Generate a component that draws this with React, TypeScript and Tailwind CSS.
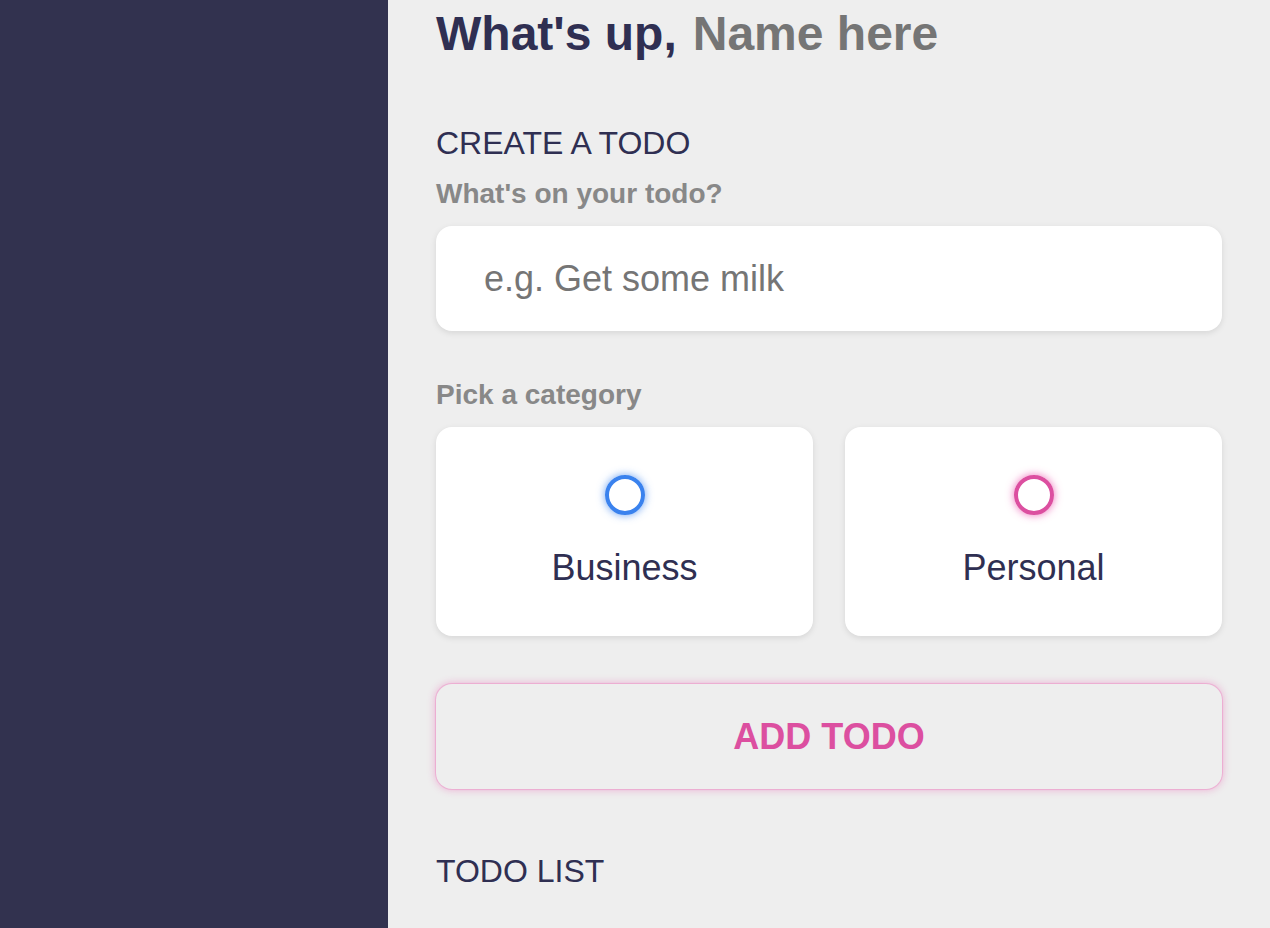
import React, {useState} from 'react';

const font = {fontFamily: '"Liberation Sans", Arial, sans-serif'};

const App: React.FC = () => {
    const [name, setName] = useState('');
    const [content, setContent] = useState('');
    const [category, setCategory] = useState<string | null>(null);

    const options = [
        {value: 'business', label: 'Business', bubble: 'border-[#3a82ee] shadow-[0_0_8px_rgba(58,130,238,0.75)]'},
        {value: 'personal', label: 'Personal', bubble: 'border-[#dc4fa0] shadow-[0_0_8px_rgba(234,64,164,0.75)]'}
    ];

    return (
        <div className="flex min-h-screen" style={font}>
            <aside className="w-[388px] shrink-0 bg-[#32324f]"></aside>

            <main className="flex-1 min-w-0 bg-[#eeeeee] px-12 pt-[6px]">
                <div className="flex">
                    <h2 className="text-[48px] leading-[55px] font-bold text-[#2f2f52] whitespace-nowrap">What's up,</h2>
                    <input
                        type="text"
                        value={name}
                        onChange={e => setName(e.target.value)}
                        placeholder="Name here"
                        className="ml-4 flex-1 min-w-0 w-0 bg-transparent outline-none text-[48px] leading-[55px] font-bold text-[#2f2f52] placeholder:text-[#757575]"
                    />
                </div>

                <section className="mt-16">
                    <h3 className="text-[32px] leading-[37px] text-[#2f2f52] mb-4">CREATE A TODO</h3>
                    <h4 className="text-[28px] leading-[32px] font-bold text-[#888888] mb-4">What's on your todo?</h4>
                    <input
                        type="text"
                        value={content}
                        onChange={e => setContent(e.target.value)}
                        placeholder="e.g. Get some milk"
                        className="block w-full bg-white rounded-2xl px-12 py-8 text-[36px] leading-[41px] text-[#2f2f52] outline-none shadow-[0_2px_6px_rgba(0,0,0,0.1)] placeholder:text-[#757575] mb-12"
                    />

                    <h4 className="text-[28px] leading-[32px] font-bold text-[#888888] mb-4">Pick a category</h4>
                    <div className="grid grid-cols-2 gap-8 mb-12">
                        {options.map(o => (
                            <label
                                key={o.value}
                                onClick={() => setCategory(o.value)}
                                className="flex flex-col items-center justify-center bg-white p-12 rounded-2xl shadow-[0_2px_6px_rgba(0,0,0,0.1)] cursor-pointer"
                            >
                                <span className={`block w-10 h-10 rounded-full border-4 ${o.bubble} ${category === o.value ? 'bg-white' : ''}`}></span>
                                <div className="mt-8 text-[36px] leading-[41px] text-[#2f2f52]">{o.label}</div>
                            </label>
                        ))}
                    </div>

                    <button
                        className="block w-full rounded-2xl py-8 px-12 text-[36px] leading-[41px] font-bold uppercase text-[#dc4fa0] bg-transparent shadow-[0_0_0_1px_rgba(234,64,164,0.2),0_0_8px_rgba(234,64,164,0.45)]"
                    >
                        Add todo
                    </button>
                </section>

                <section className="mt-16">
                    <h3 className="text-[32px] leading-[37px] text-[#2f2f52] mb-4">TODO LIST</h3>
                </section>
            </main>
        </div>
    );
};

export default App;
